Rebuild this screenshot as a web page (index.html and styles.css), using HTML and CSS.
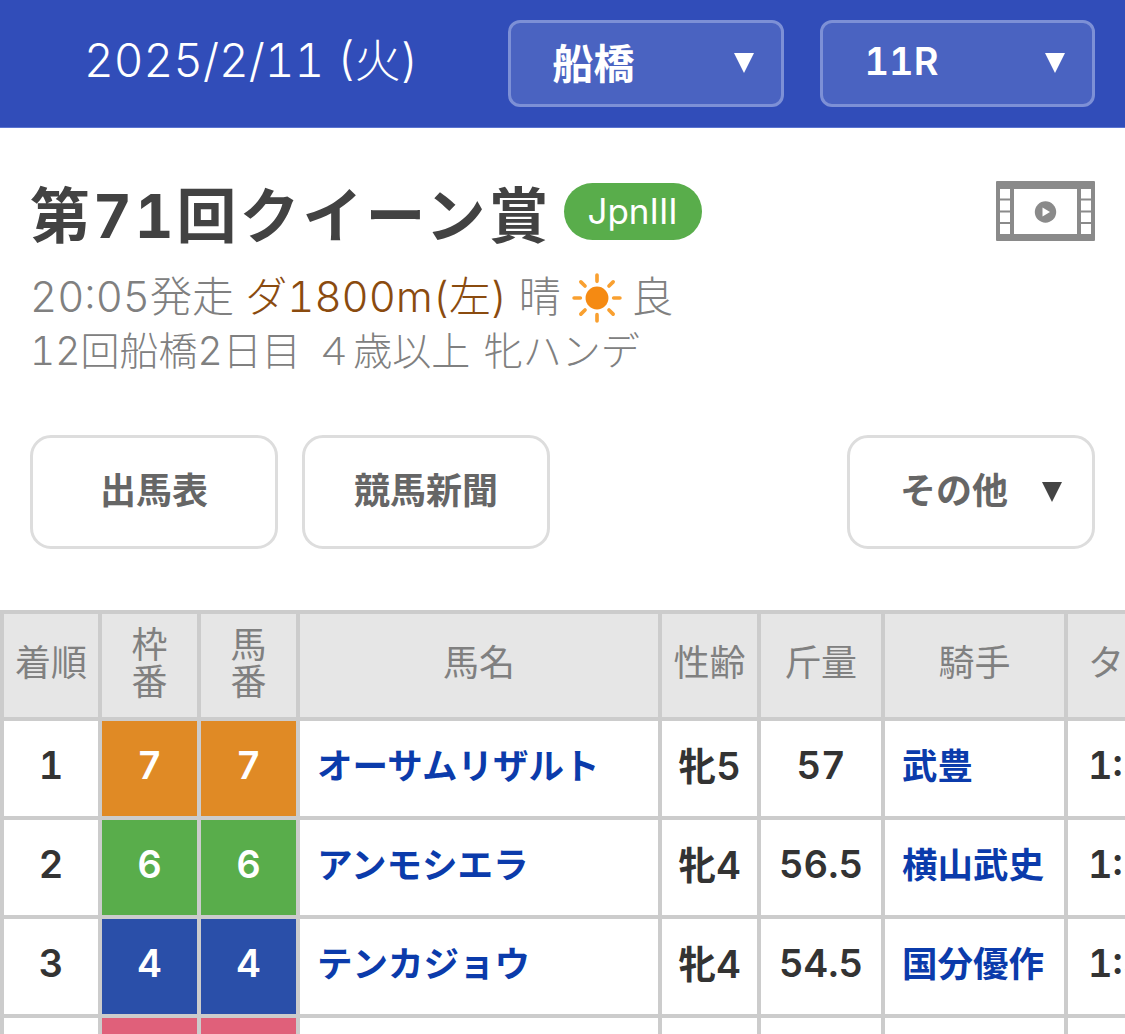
FILE: index.html
```html
<!DOCTYPE html>
<html lang="ja">
<head>
<meta charset="utf-8">
<title>第71回クイーン賞</title>
<link rel="stylesheet" href="styles.css">
</head>
<body>
<header class="topbar">
  <div class="date">2025/2/11 (火)</div>
  <div class="select"><span>船橋</span><i class="caret"></i></div>
  <div class="select select-race"><span class="race-no">11R</span><i class="caret"></i></div>
</header>
<section class="race">
  <div class="title-row">
    <h1>第71回クイーン賞</h1>
    <span class="grade">JpnIII</span>
    <svg class="movie" viewBox="0 0 99 60" width="99" height="60">
      <path fill="#8a8a8a" fill-rule="evenodd" d="M1 0h97a1 1 0 0 1 1 1v58a1 1 0 0 1-1 1H1a1 1 0 0 1-1-1V1a1 1 0 0 1 1-1zM4 8v9.500h10V8zM4 19.500v10h10v-10zM4 31.500V41h10v-9.500zM4 43v10h10V43zM18 8v45h63V8zM85 8v9.500h10V8zM85 19.500v10h10v-10zM85 31.500V41h10v-9.500zM85 43v10h10V43z"/>
      <circle cx="49.500" cy="31" r="10.700" fill="#8a8a8a"/>
      <path d="M46.500 26.500v9l7.500-4.500z" fill="#fff"/>
    </svg>
  </div>
  <p class="info line1">20:05発走 <span class="course">ダ1800m(左)</span> 晴
    <svg class="sun" viewBox="0 0 48 48" width="50" height="50">
      <circle cx="24" cy="24" r="11" fill="#f58a12"/>
      <path stroke="#f9a030" stroke-width="3.500" stroke-linecap="round" fill="none" d="M24 2v6M24 40v6M2 24h6M40 24h6M8.500 8.500l4 4M35.500 35.500l4 4M8.500 39.500l4-4M35.500 12.500l4-4"/>
    </svg> 良</p>
  <p class="info line2">12回船橋2日目 ４歳以上 牝ハンデ</p>
</section>
<nav class="tabs">
  <a class="tab tab-a">出馬表</a>
  <a class="tab tab-b">競馬新聞</a>
  <a class="tab tab-c">その他<i class="caret dark"></i></a>
</nav>
<div class="table-wrap">
<table class="result">
  <colgroup>
    <col class="c1"><col class="c2"><col class="c3"><col class="c4"><col class="c5"><col class="c6"><col class="c7"><col class="c8">
  </colgroup>
  <thead>
    <tr><th>着順</th><th>枠<br>番</th><th>馬<br>番</th><th>馬名</th><th>性齢</th><th>斤量</th><th>騎手</th><th class="left">タイム</th></tr>
  </thead>
  <tbody>
    <tr><td>1</td><td class="w7">7</td><td class="w7">7</td><td class="link">オーサムリザルト</td><td class="age">牝5</td><td>57</td><td class="link">武豊</td><td class="left">1:52.5</td></tr>
    <tr><td>2</td><td class="w6">6</td><td class="w6">6</td><td class="link">アンモシエラ</td><td class="age">牝4</td><td>56.5</td><td class="link">横山武史</td><td class="left">1:52.9</td></tr>
    <tr><td>3</td><td class="w4">4</td><td class="w4">4</td><td class="link">テンカジョウ</td><td class="age">牝4</td><td>54.5</td><td class="link">国分優作</td><td class="left">1:53.3</td></tr>
    <tr><td></td><td class="w8"></td><td class="w8"></td><td></td><td></td><td></td><td></td><td></td></tr>
  </tbody>
</table>
</div>
</body>
</html>
```
FILE: styles.css
```css
* { box-sizing: border-box; }
html, body { margin: 0; padding: 0; height: 1034px; overflow: hidden; background: #fff; }
body { font-family: "Inter", "Noto Sans CJK JP", sans-serif; color: #444; font-variant-numeric: tabular-nums; }

.topbar {
  height: 128px;
  background: #314db9;
  border-bottom: 1px solid #5a74d0;
  display: flex;
  align-items: center;
  padding: 0 30px 1px 84px;
  gap: 36px;
}
.date {
  font-weight: 300;
  font-size: 46px;
  color: #fff;
  width: 387.500px;
  flex: none;
  white-space: nowrap;
  margin-top: -12px;
}
.select {
  width: 276px;
  height: 87px;
  flex: none;
  background: #4a63c1;
  border: 3px solid #7d90d6;
  border-radius: 12px;
  display: flex;
  align-items: center;
  justify-content: space-between;
  padding: 0 27px 0 42px;
  color: #fff;
  font-size: 41px;
  font-weight: 600;
}
.select-race { width: 275.500px; }
.select span { white-space: nowrap; padding-bottom: 5px; }
.select .race-no { font-size: 38px; }
.caret {
  display: block;
  width: 0; height: 0;
  border-left: 10px solid transparent;
  border-right: 10px solid transparent;
  border-top: 20px solid #fff;
}
.caret.dark { border-top-color: #444; margin: 8px 0 0 34px; }

.race { padding: 50px 30px 0; height: 297px; }
.title-row { display: flex; align-items: center; height: 70px; }
h1 { margin: 6px 0 0; font-size: 60px; font-weight: 700; color: #424242; line-height: 70px; white-space: nowrap; letter-spacing: 3px; }
.grade {
  margin-left: 12px;
  width: 138px; height: 57px;
  border-radius: 29px;
  background: #59ad4b;
  color: #fff;
  font-size: 35px;
  display: flex; align-items: center; justify-content: center;
  font-weight: 400;
  margin-top: -4px;
}
.movie { margin-left: auto; margin-top: -5px; }
.info { margin: 0; color: #808080; font-size: 42px; font-weight: 300; white-space: nowrap; }
.line1 { margin-top: 22px; height: 54px; line-height: 54px; display: block; }
.line2 { font-size: 39px; line-height: 54px; height: 54px; word-spacing: 3px; }
.course { color: #8a4b0f; }
.sun { vertical-align: -11px; margin-right: -2px; }

.tabs { display: flex; padding: 0 30px; height: 175px; align-items: flex-start; gap: 24px; margin-top: 10px; }
.tab {
  height: 114px;
  width: 248px;
  background: #fff;
  border: 3px solid #ddd;
  border-radius: 21px;
  display: flex; align-items: center; justify-content: center;
  color: #666;
  font-size: 36px;
  font-weight: 700;
  padding-bottom: 8px;
}
.tab-c { margin-left: auto; padding-left: 20px; }

.table-wrap { width: 1125px; overflow: hidden; }
.result { border-collapse: collapse; table-layout: fixed; width: 1300px; }
.c1 { width: 98px; } .c2 { width: 99px; } .c3 { width: 99px; } .c4 { width: 362px; }
.c5 { width: 99px; } .c6 { width: 124px; } .c7 { width: 183px; } .c8 { width: 236px; }
.result th, .result td { border: 4px solid #ccc; padding: 0; text-align: center; white-space: nowrap; }
.result th {
  height: 107px; background: #e6e6e6; color: #808080;
  font-size: 36px; font-weight: 400; line-height: 37px; padding-bottom: 4px;
}
.result td { height: 99px; font-size: 38px; font-weight: 600; color: #333; padding-bottom: 7px; }
.result td.age, .result td.link { padding-bottom: 10px; }
.result td.link { text-align: left; padding-left: 17px; color: #0b3bab; font-size: 35.500px; font-weight: 700; }
.result .left { text-align: left; padding-left: 20px; }
.result td.w7 { background: #e08a25; color: #fff; }
.result td.w6 { background: #59ad4b; color: #fff; }
.result td.w4 { background: #2a4fa9; color: #fff; }
.result td.w8 { background: #e0607a; color: #fff; }
```
